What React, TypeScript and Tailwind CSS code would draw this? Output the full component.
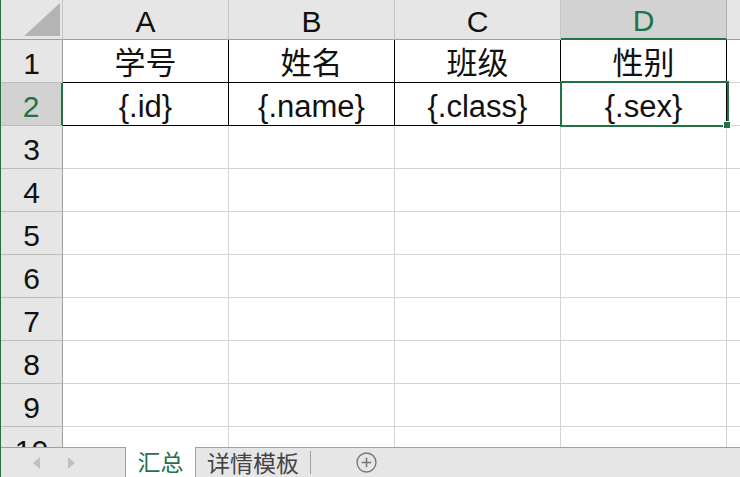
import { Fragment } from "react";

const cols = ["A", "B", "C", "D"];
const rows = [1, 2, 3, 4, 5, 6, 7, 8, 9, 10];

const data: Record<number, string[]> = {
  1: ["学号", "姓名", "班级", "性别"],
  2: ["{.id}", "{.name}", "{.class}", "{.sex}"],
};

const font = { fontFamily: '"Liberation Sans", "Noto Sans CJK SC", sans-serif' };

function Corner() {
  return (
    <div className="relative h-10 border-r border-b border-r-[#c6c6c6] border-b-[#9e9e9e] bg-[#e6e6e6]">
      <svg className="absolute right-[2px] bottom-[3px]" width="36" height="33" viewBox="0 0 36 33">
        <polygon points="36,0 36,33 0,33" fill="#b4b4b4" />
      </svg>
    </div>
  );
}

export default function App() {
  return (
    <div className="flex h-[477px] w-[740px] flex-col overflow-hidden border-l border-[#217346] bg-white text-[#111]" style={font}>
      {/* sheet grid */}
      <div className="relative h-[447px] overflow-hidden">
        <div className="grid grid-cols-[62px_166px_166px_166px_166px_1fr] grid-rows-[40px_repeat(10,43px)]">
          <Corner />
          {cols.map((c) => (
            <div
              key={c}
              className={
                c === "D"
                  ? "flex items-center justify-center border-r border-b-2 border-r-[#ababab] border-b-[#217346] bg-[#d2d2d2] pt-[3px] text-[30px] text-[#217346]"
                  : "flex items-center justify-center border-r border-b border-r-[#c6c6c6] border-b-[#9e9e9e] bg-[#e6e6e6] pt-[3px] text-[30px]"
              }
            >
              {c}
            </div>
          ))}
          <div className="border-b border-b-[#9e9e9e] bg-[#e6e6e6]" />

          {rows.map((r) => (
            <Fragment key={r}>
              <div
                className={
                  r === 2
                    ? "flex items-center justify-center border-r-2 border-b border-r-[#217346] border-b-[#bdbdbd] bg-[#d2d2d2] pt-[4px] text-[30px] text-[#217346]"
                    : "flex items-center justify-center border-r border-b border-r-[#9e9e9e] border-b-[#bdbdbd] bg-[#e6e6e6] pt-[4px] text-[30px]"
                }
              >
                {r}
              </div>
              {cols.map((c, i) => {
                const inTable = r <= 2;
                return (
                  <div
                    key={c}
                    className={
                      inTable
                        ? "flex items-center justify-center border-r border-b border-black pt-[4px] text-[31px] leading-none"
                        : "border-r border-b border-[#d4d4d4]"
                    }
                  >
                    {data[r]?.[i]}
                  </div>
                );
              })}
              <div className="border-b border-[#d4d4d4]" />
            </Fragment>
          ))}
        </div>

        {/* selected cell D2 */}
        <div className="pointer-events-none absolute left-[559px] top-[81px] h-[46px] w-[169px] border-2 border-[#217346]" />
        <div className="absolute left-[722px] top-[121px] h-[8px] w-[8px] border border-white bg-[#217346]" />
      </div>

      {/* sheet tabs */}
      <div className="flex h-[30px] items-stretch bg-[#e6e6e6]" style={{ fontFamily: '"Noto Sans CJK SC", sans-serif' }}>
        <div className="flex w-[125px] items-center gap-[26px] border-t border-r border-[#a0a0a0] pl-[30px]">
          <svg width="10" height="14" viewBox="0 0 10 14">
            <polygon points="9,1 9,13 2,7" fill="#c0c0c0" />
          </svg>
          <svg width="10" height="14" viewBox="0 0 10 14">
            <polygon points="1,1 1,13 8,7" fill="#c0c0c0" />
          </svg>
        </div>
        <div className="flex w-[70px] items-center justify-center border-r border-[#a0a0a0] bg-white pb-[1px] text-[23px] leading-none text-[#217346]">
          汇总
        </div>
        <div className="flex flex-1 items-stretch border-t border-[#a0a0a0]">
          <div className="flex w-[114px] items-center justify-center pb-[1px] text-[23px] leading-none text-[#444]">
            详情模板
          </div>
          <div className="my-[3px] w-px bg-[#a0a0a0]" />
          <div className="flex w-[110px] items-center justify-center">
            <svg width="21" height="21" viewBox="0 0 20 20">
              <circle cx="10" cy="10" r="9" fill="none" stroke="#777" strokeWidth="1.3" />
              <path d="M10 5.5v9M5.5 10h9" stroke="#777" strokeWidth="1.5" />
            </svg>
          </div>
        </div>
      </div>
    </div>
  );
}
